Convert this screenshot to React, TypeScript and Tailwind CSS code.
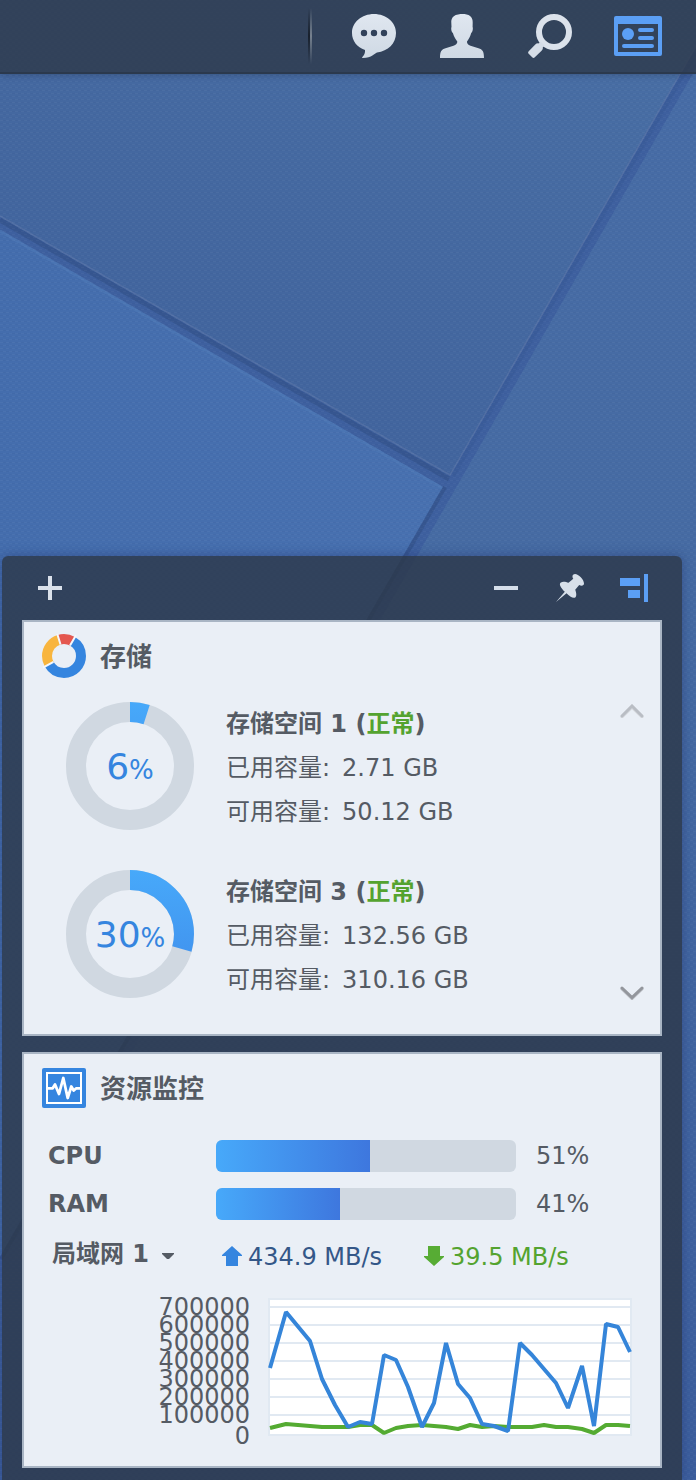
import { useState } from 'react'
import type { ReactNode } from 'react'

const volumes = [
  { name: '存储空间 1', status: '正常', percent: 6, arc: 5, used: '2.71 GB', free: '50.12 GB' },
  { name: '存储空间 3', status: '正常', percent: 30, arc: 29.5, used: '132.56 GB', free: '310.16 GB' },
]

const meters = [
  { label: 'CPU', value: 51, fill: 154 / 3 },
  { label: 'RAM', value: 41, fill: 124 / 3 },
]

const ticks = ['700000', '600000', '500000', '400000', '300000', '200000', '100000', '0']

const uploadLine =
  '2,70 18,14 42,43 54,81 67,107 80,129 92,124 104,126 116,57 128,62 140,89 154,129 166,105 178,45 190,86 202,100 214,126 226,128 240,133 252,45 264,57 288,85 300,110 314,68 326,128 338,26 350,29 362,54'
const downloadLine =
  '2,130 18,126 42,128 54,129 67,129 80,129 92,127 104,127 116,135 128,130 140,128 154,127 166,128 178,129 190,131 202,127 214,129 226,128 240,129 252,129 264,129 276,127 288,129 300,129 314,131 326,135 338,127 350,127 362,128'

function Wallpaper() {
  return (
    <svg
      className="absolute inset-0 w-full h-full"
      viewBox="0 0 696 1480"
      preserveAspectRatio="xMinYMin slice"
      aria-hidden="true"
    >
      <defs>
        <linearGradient id="tileTop" x1="0.9" y1="0" x2="0.35" y2="0.8">
          <stop offset="0" stopColor="#496fa5" />
          <stop offset="1" stopColor="#42659e" />
        </linearGradient>
        <linearGradient id="tileLeft" x1="0" y1="0" x2="1" y2="0.3">
          <stop offset="0" stopColor="#446dad" />
          <stop offset="1" stopColor="#4871b0" />
        </linearGradient>
        <linearGradient id="tileRight" x1="0" y1="0" x2="0" y2="1">
          <stop offset="0" stopColor="#476ca6" />
          <stop offset="0.4" stopColor="#466ba3" />
          <stop offset="1" stopColor="#3d5f9e" />
        </linearGradient>
        <pattern id="weave" width="6" height="6" patternUnits="userSpaceOnUse">
          <path d="M0 0h3v1h-3zM3 3h3v1h-3z" fill="#ffffff" opacity="0.03" />
          <path d="M3 0h3v1h-3zM0 3h3v1h-3z" fill="#1c2c66" opacity="0.06" />
        </pattern>
      </defs>
      <rect width="696" height="1480" fill="#3e609f" />
      <path d="M723 0L450 476L0 217V0Z" fill="url(#tileTop)" />
      <path d="M0 230L443 487L0 1257Z" fill="url(#tileLeft)" />
      <path d="M735 0L417 556L0 1281V1480H696V0Z" fill="url(#tileRight)" />
      {/* groove shadows and lit edges */}
      <path d="M0 220L449 479" stroke="#33528a" strokeWidth="5" fill="none" opacity="0.7" />
      <path d="M445 487L1 1259" stroke="#33528a" strokeWidth="4" fill="none" opacity="0.7" />
      <path d="M726 0L453 476" stroke="#385a97" strokeWidth="4" fill="none" opacity="0.6" />
      <path d="M0 216L450 475L723 -1" stroke="#5974a6" strokeWidth="1.5" fill="none" opacity="0.7" />
      <path d="M0 231L442 488" stroke="#4d77b5" strokeWidth="3" fill="none" opacity="0.7" />
      <rect width="696" height="1480" fill="url(#weave)" />
    </svg>
  )
}

function ChatIcon() {
  return (
    <svg width="44" height="44" viewBox="0 0 44 44" fill="url(#metal)">
      <path
        fillRule="evenodd"
        d="M22 0C34.200 0 44 8.300 44 19C44 29.500 36 37 25 38.600C22.500 39.500 20 44 10.800 44C9.900 44 9.900 43.400 10.600 42.700C12 41.200 13.400 39 13 36C5 33 0 27 0 19C0 8.300 9.800 0 22 0ZM12 15.800a3.200 3.200 0 1 0 0 6.400a3.200 3.200 0 0 0 0-6.400ZM22 15.800a3.200 3.200 0 1 0 0 6.400a3.200 3.200 0 0 0 0-6.400ZM32 15.800a3.200 3.200 0 1 0 0 6.400a3.200 3.200 0 0 0 0-6.400Z"
      />
    </svg>
  )
}

function UserIcon() {
  return (
    <svg width="44" height="44" viewBox="0 0 44 44" fill="url(#metal)">
      <path d="M22 0C29 0 33 2.500 32.700 8.500L32.600 13C33.200 14 32.800 18 31.200 19C30.300 22.500 28.600 25.500 27 27.500C26.800 29.500 28 30.800 30.500 31.700L38.500 34.300C42.500 35.500 44 37.500 44 44H0C0 37.500 1.500 35.500 5.500 34.300L13.500 31.700C16 30.800 17.500 29.500 17.300 27.500C15.700 25.500 13.800 22.500 12.900 19C11.300 18 10.900 14 11.500 13L11.300 8.500C11 4.500 13.500 1.500 17 .8C18.500 .2 20 0 22 0Z" />
    </svg>
  )
}

function SearchIcon() {
  return (
    <svg width="44" height="44" viewBox="0 0 44 44">
      <circle cx="26" cy="18" r="15" fill="none" stroke="#dbe2eb" strokeWidth="6" />
      <path
        d="M12.500 27.500L16.800 31.500L14.800 33.300C15 34.800 14.600 35.700 13.600 36.700L6.800 43.300C6 44.100 5 44.100 4.200 43.300L.7 39.800C-.1 39 -.1 38 .7 37.200L7.300 30.500C8.200 29.600 9.200 29.200 10.800 29.400Z"
        fill="#d5dde7"
      />
    </svg>
  )
}

function WidgetsIcon() {
  return (
    <svg width="48" height="40" viewBox="0 0 48 40" fill="#5b9ff5">
      <path
        fillRule="evenodd"
        d="M2 0H46Q48 0 48 2V38Q48 40 46 40H2Q0 40 0 38V2Q0 0 2 0ZM4 8V36H44V8Z"
      />
      <circle cx="14" cy="18" r="6" />
      <path d="M26 14H38M26 22H38M10 30H38" stroke="#5b9ff5" strokeWidth="4" strokeLinecap="round" />
    </svg>
  )
}

function PinIcon() {
  return (
    <svg width="28" height="28" viewBox="0 0 28 28" fill="#d8e0ea">
      <path d="M0 28L8.800 17.700C5 14 2.800 10.500 4.500 8.700C7 7 10 8 12.500 8.800L17.300 4.800C15.800 2.500 16.500 .2 19 0C22.500 0 28 5.500 28 9.500C28 11.700 25.500 12.200 23.200 11L19.200 15.700C20.300 18.500 21 22 19.200 23.500C17 24.500 13.500 22.500 10.500 19.300Z" />
    </svg>
  )
}

function StorageIcon() {
  return (
    <svg width="44" height="44" viewBox="0 0 44 44" fill="none" strokeWidth="10">
      <g transform="rotate(-90 22 22)">
        <circle cx="22" cy="22" r="17" stroke="#3585df" pathLength="360" strokeDasharray="211 149" strokeDashoffset="-30" />
        <circle cx="22" cy="22" r="17" stroke="#f8b53e" pathLength="360" strokeDasharray="102 258" strokeDashoffset="-241" />
        <circle cx="22" cy="22" r="17" stroke="#e4574f" pathLength="360" strokeDasharray="47 313" strokeDashoffset="17" />
      </g>
      <path d="M18.500 10.500L15 -1M28 11.600L34 1.200M11.500 27.800L1 33.700" stroke="#f5f8fc" strokeWidth="2" />
    </svg>
  )
}

function MonitorIcon() {
  return (
    <svg width="44" height="40" viewBox="0 0 44 40" fill="none">
      <rect width="44" height="40" rx="2" fill="#3585df" />
      <rect x="5" y="5" width="34" height="30" stroke="#fff" strokeWidth="2" />
      <path
        d="M6 20.300H10.700L13 16.500L17 26L21.300 10L25.700 30L29.300 18.500L31.700 22.500L34.300 20.300H38"
        stroke="#fff"
        strokeWidth="2.800"
        strokeLinejoin="round"
      />
    </svg>
  )
}

function Donut({ percent, arc }: { percent: number; arc: number }) {
  return (
    <div className="relative size-32 shrink-0">
      <svg width="128" height="128" viewBox="0 0 128 128" fill="none" strokeWidth="20" aria-hidden="true">
        <circle cx="64" cy="64" r="54" stroke="#d0d8e1" />
        <circle
          cx="64"
          cy="64"
          r="54"
          stroke="url(#arc)"
          pathLength="100"
          strokeDasharray={`${arc} 100`}
          transform="rotate(-90 64 64)"
        />
      </svg>
      <div className="absolute inset-0 flex items-center justify-center pt-0.5 text-[#3585df]">
        <span className="text-4xl">
          {percent}
          <span className="text-[26px]">%</span>
        </span>
      </div>
    </div>
  )
}

function Card({ icon, title, children }: { icon: ReactNode; title: string; children: ReactNode }) {
  return (
    <section className="border-2 border-[#a9b5c4] bg-[#eaeff6]">
      <header className="flex items-center gap-3.5 pt-3 pl-[18px] h-14">
        {icon}
        <h2 className="pt-0.5 text-[26px] font-bold">{title}</h2>
      </header>
      {children}
    </section>
  )
}

export default function App() {
  const [lan, setLan] = useState('局域网 1')

  return (
    <div className="relative min-h-screen flex flex-col overflow-hidden bg-[#3c5d99] font-['DejaVu_Sans','Noto_Sans_CJK_SC',sans-serif] text-2xl text-[#555b64]">
      <svg className="absolute size-0" aria-hidden="true">
        <defs>
          <linearGradient id="metal" x1="0" y1="0" x2="0" y2="1">
            <stop offset="0" stopColor="#e0e7f0" />
            <stop offset="1" stopColor="#cfd9e4" />
          </linearGradient>
          <linearGradient id="arc" gradientUnits="userSpaceOnUse" x1="0" y1="0" x2="128" y2="0">
            <stop offset="0" stopColor="#3f8bea" />
            <stop offset="1" stopColor="#47a9fa" />
          </linearGradient>
        </defs>
      </svg>
      <Wallpaper />

      {/* Taskbar */}
      <nav className="relative flex items-center justify-end h-[74px] pr-3.5 bg-[#2d3848]/80 border-b-2 border-[#2b394d] shadow-md">
        <div className="flex w-1 h-14 mr-[18px]">
          <span className="w-0.5 bg-linear-to-b from-transparent via-[#18202c] to-transparent" />
          <span className="w-0.5 bg-linear-to-b from-transparent via-[#77828f] to-transparent" />
        </div>
        <button className="flex justify-center w-[88px]" aria-label="通知"><ChatIcon /></button>
        <button className="flex justify-center w-[88px]" aria-label="选项"><UserIcon /></button>
        <button className="flex justify-center w-[88px]" aria-label="搜索"><SearchIcon /></button>
        <button className="flex justify-center w-[88px]" aria-label="小工具"><WidgetsIcon /></button>
      </nav>

      {/* Widget panel */}
      <aside className="relative mt-auto ml-0.5 mr-3.5 px-5 pb-3 rounded-t-md bg-[#2c3747]/80 shadow-[0_0_12px_rgba(30,50,110,0.5)]">
        <div className="-mx-1 flex items-center h-16">
          <button className="flex justify-center w-16 mr-auto" aria-label="添加">
            <svg width="24" height="24" viewBox="0 0 24 24" fill="#dae1ea">
              <path d="M10 0h4v10h10v4H14v10h-4V14H0v-4h10z" />
            </svg>
          </button>
          <button className="flex justify-center w-16" aria-label="最小化">
            <svg width="24" height="24" viewBox="0 0 24 24" fill="#d5deea">
              <path d="M0 10h24v4H0z" />
            </svg>
          </button>
          <button className="flex justify-center w-16" aria-label="固定"><PinIcon /></button>
          <button className="flex justify-center w-16" aria-label="停靠">
            <svg width="28" height="28" viewBox="0 0 28 28" fill="#5b9ff5">
              <path d="M0 4h20v8H0zM8 16h12v8H8zM24 0h4v28h-4z" />
            </svg>
          </button>
        </div>

        <div className="flex flex-col gap-4">
          <Card icon={<StorageIcon />} title="存储">
            <div className="flex pt-6 pb-8 pl-[42px] pr-4">
              <ul className="flex-1 flex flex-col gap-9">
                {volumes.map((v) => (
                  <li key={v.name} className="flex gap-8">
                    <Donut percent={v.percent} arc={v.arc} />
                    <div className="leading-[44px]">
                      <h3 className="font-bold">
                        {v.name} (<span className="text-[#54a32f]">{v.status}</span>)
                      </h3>
                      <p className="flex gap-3">
                        <span>已用容量:</span>
                        <span>{v.used}</span>
                      </p>
                      <p className="flex gap-3">
                        <span>可用容量:</span>
                        <span>{v.free}</span>
                      </p>
                    </div>
                  </li>
                ))}
              </ul>
              <div className="flex flex-col justify-between">
                <button className="flex items-center h-[18px]" aria-label="向上">
                  <svg width="24" height="14" viewBox="0 0 24 14" fill="none" strokeWidth="3" strokeLinecap="round">
                    <path d="M2 13L12 3.500L22 13" stroke="#d9dce1" />
                    <path d="M2 12L12 2L22 12" stroke="#b9bdc4" />
                  </svg>
                </button>
                <button className="flex items-center h-[18px]" aria-label="向下">
                  <svg width="24" height="14" viewBox="0 0 24 14" fill="none" strokeWidth="3" strokeLinecap="round">
                    <path d="M2 3L12 12.500L22 3" stroke="#b9bcc2" />
                    <path d="M2 2L12 11.500L22 2" stroke="#93969c" />
                  </svg>
                </button>
              </div>
            </div>
          </Card>

          <Card icon={<MonitorIcon />} title="资源监控">
            <div className="flex flex-col gap-4 px-6 pt-[30px]">
              {meters.map((m) => (
                <div key={m.label} className="flex items-center h-8">
                  <span className="w-[168px] font-bold">{m.label}</span>
                  <div
                    className="flex-1 h-8 rounded-md overflow-hidden bg-[#d0d8e1]"
                    role="progressbar"
                    aria-label={m.label}
                    aria-valuenow={m.value}
                  >
                    <div
                      className="h-full bg-linear-to-r from-[#47a9fa] to-[#3e77de]"
                      style={{ width: `${m.fill}%` }}
                    />
                  </div>
                  <span className="w-[100px] ml-5">{m.value}%</span>
                </div>
              ))}

              <div className="flex items-center h-10">
                <label className="relative flex items-center w-[174px] pl-1">
                  <select
                    className="appearance-none w-32 h-10 pb-1 bg-transparent font-bold"
                    aria-label="网络接口"
                    value={lan}
                    onChange={(e) => setLan(e.target.value)}
                  >
                    <option>局域网 1</option>
                  </select>
                  <svg className="absolute left-[114px]" width="12" height="6" viewBox="0 0 12 6" fill="#555b64">
                    <path d="M0 0H12V1L7 6H5L0 1Z" />
                  </svg>
                </label>
                <span className="flex items-center gap-1.5 w-[202px] text-[#345788]">
                  <svg width="20" height="20" viewBox="0 0 20 20" fill="#3585df">
                    <path d="M10 0L20 9V10H16V20H4V10H0V9Z" />
                  </svg>
                  <span className="pt-0.5">434.9 MB/s</span>
                </span>
                <span className="flex items-center gap-1.5 text-[#54a32f]">
                  <svg width="20" height="20" viewBox="0 0 20 20" fill="#57ac34">
                    <path d="M10 20L20 11V10H16V0H4V10H0V11Z" />
                  </svg>
                  <span className="pt-0.5">39.5 MB/s</span>
                </span>
              </div>
            </div>

            {/* Network throughput */}
            <div className="flex gap-[18px] pt-[22px] pb-[18px] pl-6 pr-7">
              <div className="grid grid-rows-[repeat(7,18px)_24px] items-center w-[202px] text-right leading-[18px]">
                {ticks.map((tick) => (
                  <span key={tick}>{tick}</span>
                ))}
              </div>
              <svg
                className="flex-1 h-[138px]"
                viewBox="0 0 364 138"
                preserveAspectRatio="none"
                fill="none"
                aria-hidden="true"
              >
                <rect x="1" y="1" width="362" height="136" fill="#fff" stroke="#e1e9f2" strokeWidth="2" />
                <path
                  d="M2 9H362M2 27H362M2 45H362M2 63H362M2 81H362M2 99H362M2 117H362"
                  stroke="#e1e9f2"
                  strokeWidth="2"
                />
                <polyline points={downloadLine} stroke="#54ab32" strokeWidth="4" strokeLinejoin="bevel" />
                <polyline points={uploadLine} stroke="#3585d9" strokeWidth="4" strokeLinejoin="bevel" />
              </svg>
            </div>
          </Card>
        </div>
      </aside>
    </div>
  )
}
